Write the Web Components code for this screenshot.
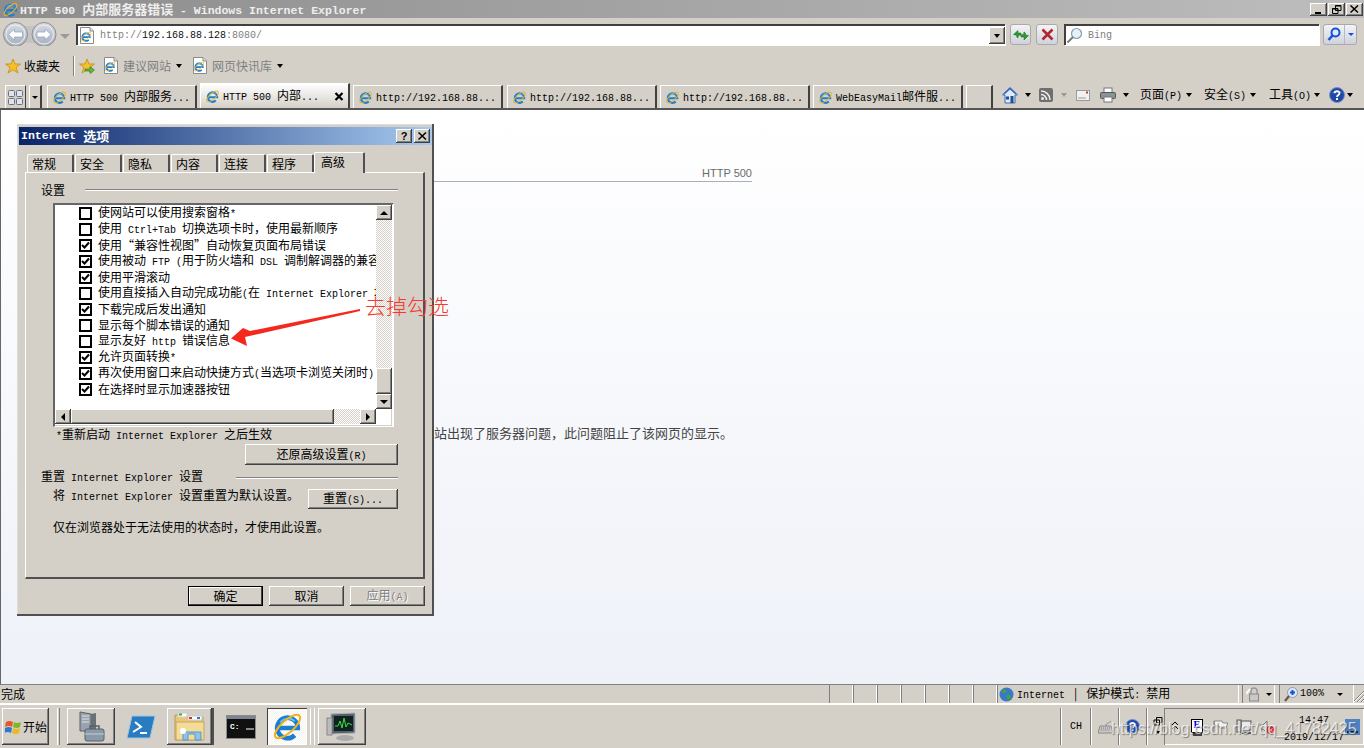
<!DOCTYPE html>
<html lang="zh">
<head>
<meta charset="UTF-8">
<title>HTTP 500 内部服务器错误</title>
<style>
  html, body { margin: 0; height: 748px; overflow: hidden; background: #d4d0c8; }
  ie-window { font: 12px/14px "Noto Sans CJK SC", "Liberation Sans", sans-serif; color: #000; }
</style>
</head>
<body>
<ie-window></ie-window>
<script>
// latin runs get a narrower mono font, so they sit at half the CJK width
const mix = s => s.replace(/[ \x21-\x7e]+/g, m => `<span class="l">${m}</span>`)

const BASE = `
  * { box-sizing: border-box; }
  .l { font: 10px/12px "Liberation Mono", monospace; white-space: pre; }
  .ar { display: inline-block; flex: none; width: 0; height: 0; border-style: solid; border-color: #000 transparent transparent; border-width: 4px 3.500px 0; }
  .ar.off { border-top-color: #9a9a9a; }
  svg { display: block; flex: none; }
`
const RAISED = 'box-shadow: inset -1px -1px #404040, inset 1px 1px #fff, inset -2px -2px #808080;'

const logoInner = `
  <path d="M6 17.500H26A10 10 0 1 0 23 24.500" fill="none" stroke="#1b7fd0" stroke-width="4.500"/>
  <path d="M9 12A9 9 0 0 1 23 11" fill="none" stroke="#6cc3f0" stroke-width="1.500"/>
  <ellipse cx="16" cy="16" rx="15.500" ry="6" transform="rotate(-42 16 16)" fill="none" stroke="#efb221" stroke-width="2"/>`
const logo = n => `<svg width="${n}" height="${n}" viewBox="0 0 32 32">${logoInner}</svg>`
const pageIcon = `<svg width="16" height="17" viewBox="0 0 16 17"><path d="M1.500.500H11L14.500 4V16.500H1.500Z" fill="#fff" stroke="#8a8a8a"/><path d="M11 .500V4H14.500" fill="#ddd" stroke="#8a8a8a"/><g transform="translate(1 3.500) scale(.38)">${logoInner}</g></svg>`
const star = `<path d="M8 1L10 6H15.500L11 9.500L13 15L8 11.800L3 15L5 9.500L.500 6H6Z" fill="#f5c02c" stroke="#c98a10" stroke-width=".8"/>`
const helpIcon = n => `<svg width="${n}" height="${n}" viewBox="0 0 16 16"><circle cx="8" cy="8" r="7.500" fill="#1f49a8" stroke="#7a8fc8"/><path d="M3 6A5.500 4 0 0 1 13 6Z" fill="#7fa0e8" opacity=".6"/><path d="M5.600 6.200C5.600 3.500 10.500 3.500 10.500 6.200C10.500 8 8 8 8 10" fill="none" stroke="#fff" stroke-width="1.800"/><rect x="7" y="11" width="2" height="2" fill="#fff"/></svg>`

class IeTitle extends HTMLElement {
  connectedCallback() {
    this.attachShadow({ mode: 'open' }).innerHTML = `<style>${BASE}
      :host { display: flex; align-items: center; height: 18px; padding-left: 2px; background: linear-gradient(90deg, #8d8d8d, #bdbdbd); color: #eeeeee; font-size: 13px; font-weight: 700; white-space: pre; }
      .l { font-size: 11.500px; font-weight: 700; }
      span.t { margin-left: 1px; }
      .btns { display: flex; gap: 1px; margin-left: auto; margin-right: 1px; }
      .btns i { width: 17px; height: 13px; background: #d4d0c8; ${RAISED} display: flex; align-items: center; justify-content: center; }
    </style>
    ${logo(17)}<span class="t">${mix('HTTP 500 内部服务器错误 - Windows Internet Explorer')}</span>
    <div class="btns">
      <i><svg width="9" height="9"><rect x="1" y="7" width="6" height="2"/></svg></i>
      <i><svg width="10" height="9"><path d="M3.500.500H9V5.500H3.500ZM.500 3.500H6V8.500H.500Z" fill="#d4d0c8" stroke="#000"/><path d="M3 1H9M0 4H6" stroke="#000"/></svg></i>
      <i><svg width="9" height="8"><path d="M.500.500L8 7.500M8 .500L.500 7.500" stroke="#000" stroke-width="1.500"/></svg></i>
    </div>`
  }
}

class IeNav extends HTMLElement {
  connectedCallback() {
    const arrow = (cx, d) => `<circle cx="${cx}" cy="12.500" r="12" fill="url(#g)" stroke="#8f8f8f"/><circle cx="${cx}" cy="12.500" r="9.500" fill="none" stroke="#eef0f4"/><path d="${d}" fill="#fff" stroke="#8aa0bc" stroke-width=".7"/>`
    this.attachShadow({ mode: 'open' }).innerHTML = `<style>${BASE}
      :host { display: flex; height: 28px; padding: 6px 0 0 3px; background: #d4d0c8; align-items: flex-start; }
      .field { height: 21px; background: #fff; display: flex; align-items: center; border-top: 2px solid #404040; border-left: 2px solid #404040; box-shadow: 1px 1px #fff; }
      .addr { width: 929px; margin-left: 6px; padding-left: 1px; }
      .addr .l { color: #808080; margin-left: 5px; }
      .addr b { font-weight: 400; color: #111; }
      .drop { width: 16px; height: 17px; margin-left: auto; background: #d4d0c8; ${RAISED} display: flex; align-items: center; justify-content: center; }
      .tb { height: 21px; border: 1px solid #a9a9b0; border-radius: 3px; background: linear-gradient(#f4f4f6, #cfd2dc); display: flex; align-items: center; justify-content: center; }
      .search { width: 255px; margin-left: 6px; }
      .search .l { color: #808080; margin-left: 5px; }
      .go { display: flex; width: 34px; margin-left: 4px; padding: 0; }
      .go span { display: flex; align-items: center; justify-content: center; height: 100%; }
    </style>
    <svg width="54" height="26" viewBox="0 0 54 26" style="margin-top:-2px">
      <defs><linearGradient id="g" x1="0" y1="0" x2="0" y2="1"><stop offset="0" stop-color="#d8dce4"/><stop offset="1" stop-color="#a6aebc"/></linearGradient></defs>
      <rect x="10" y="4" width="34" height="17" fill="#c4c4c4"/>
      ${arrow(12.5, 'M5.500 12.500L11.500 7V10H19.500V15H11.500V18Z')}
      ${arrow(41, 'M48 12.500L42 7V10H34V15H42V18Z')}
    </svg>
    <i class="ar off" style="margin:10px 0 0 3px;border-width:5px 5px 0"></i>
    <div class="field addr">${pageIcon}<span class="l">http://<b>192.168.88.128</b>:8080/</span>
      <div class="drop"><i class="ar"></i></div></div>
    <div class="tb" style="width:21px;margin-left:5px"><svg width="16" height="14" viewBox="0 0 16 14"><path d="M8 5H5V2.500L.500 6.500L2 7H3.500C3.500 9 4 9.500 5 10C5 8 5.500 7 8 7Z" fill="#2d9a2d" stroke="#156a15" stroke-width=".5"/><path d="M8 9H11V12L15.500 7.500H13C13 5.500 12 4.500 11 4C11 6 10 7 8 7Z" fill="#2d9a2d" stroke="#156a15" stroke-width=".5"/></svg></div>
    <div class="tb" style="width:22px;margin-left:5px"><svg width="13" height="13" viewBox="0 0 13 13"><path d="M1.500 1.500L11.500 11.500M11.500 1.500L1.500 11.500" stroke="#b5252d" stroke-width="2.600"/></svg></div>
    <div class="field search"><svg width="17" height="17" viewBox="0 0 17 17"><circle cx="10.500" cy="6.500" r="5" fill="#e4f1fb" stroke="#8a9cab" stroke-width="1.200"/><path d="M7 10L1.500 15.500" stroke="#7a7a7a" stroke-width="2"/></svg><span class="l">Bing</span></div>
    <div class="tb go"><span style="width:21px;border-right:1px solid #b4b7c4"><svg width="14" height="15" viewBox="0 0 14 15"><circle cx="8.500" cy="5.500" r="4" fill="#dbe9ff" stroke="#1a50d8" stroke-width="2"/><path d="M5.500 8.500L1.500 13" stroke="#1a50d8" stroke-width="2.600"/></svg></span><span style="flex:1"><i class="ar" style="border-top-color:#1a50d8;border-width:3px 3px 0"></i></span></div>`
  }
}

class IeFavs extends HTMLElement {
  connectedCallback() {
    this.attachShadow({ mode: 'open' }).innerHTML = `<style>${BASE}
      :host { display: flex; align-items: center; height: 36px; padding: 3px 0 0 5px; background: #d4d0c8; }
      .off { color: #808080; margin-left: 4px; }
      .sep { width: 1px; height: 20px; margin-left: 13px; background: #808080; box-shadow: 1px 0 #fff; }
    </style>
    <svg width="16" height="16" viewBox="0 0 16 16">${star}</svg>
    <span style="margin-left:3px">收藏夹</span>
    <i class="sep"></i>
    <svg width="16" height="16" viewBox="0 0 16 16" style="margin-left:5px">${star}<path d="M6 11H11V8.500L15.500 12L11 15.500V13H6Z" fill="#5dbb3c" stroke="#2c7a1c" stroke-width=".6"/></svg>
    <span style="margin-left:8px">${pageIcon}</span><span class="off">建议网站</span>
    <i class="ar" style="margin-left:5px"></i>
    <span style="margin-left:10px">${pageIcon}</span><span class="off">网页快讯库</span>
    <i class="ar" style="margin-left:5px"></i>`
  }
}

class IeTab extends HTMLElement {
  connectedCallback() {
    const close = this.hasAttribute('active') ? '<svg class="x" width="10" height="9" viewBox="0 0 10 9"><path d="M1.500 1L8.500 8M8.500 1L1.500 8" stroke="#000" stroke-width="2.200"/></svg>' : ''
    this.attachShadow({ mode: 'open' }).innerHTML = `<style>${BASE}
      :host { display: flex; align-items: center; flex: none; width: 150px; height: 23px; margin-right: 3px; padding-left: 4px; background: #d4d0c8; border-top: 1px solid #fff; border-left: 1px solid #fff; border-right: 2px solid #404040; white-space: nowrap; overflow: hidden; }
      :host([active]) { height: 25px; background: linear-gradient(#fff, #d4d0c8); }
      div { margin-left: 3px; }
      .x { margin-left: auto; margin-right: 4px; }
    </style>${logo(15)}<div><slot></slot></div>${close}`
  }
}

class IeTabstrip extends HTMLElement {
  connectedCallback() {
    this.attachShadow({ mode: 'open' }).innerHTML = `<style>${BASE}
      :host { display: flex; align-items: flex-end; height: 28px; padding-left: 5px; background: #d4d0c8; border-bottom: 2px solid #555; }
      .box { flex: none; height: 23px; border-top: 1px solid #fff; border-left: 1px solid #fff; border-right: 2px solid #404040; display: flex; align-items: center; justify-content: center; }
      .tools { display: flex; align-items: center; align-self: center; height: 22px; white-space: nowrap; }
      .tools span { flex: none; }
    </style>
    <div class="box" style="width:21px;border-right-width:1px"><svg width="15" height="15" viewBox="0 0 15 15"><g fill="#dfe3ee" stroke="#6b7080"><rect x=".5" y=".5" width="6" height="6" rx="1"/><rect x="8.500" y=".5" width="6" height="6" rx="1"/><rect x=".5" y="8.500" width="6" height="6" rx="1"/><rect x="8.500" y="8.500" width="6" height="6" rx="1"/></g></svg></div>
    <div class="box" style="width:13px;margin:0 5px 0 3px"><i class="ar" style="border-width:3px 3px 0"></i></div>
    <ie-tab>${mix('HTTP 500 内部服务...')}</ie-tab>
    <ie-tab active>${mix('HTTP 500 内部...')}</ie-tab>
    <ie-tab>${mix('http://192.168.88...')}</ie-tab>
    <ie-tab style="margin-left:1px">${mix('http://192.168.88...')}</ie-tab>
    <ie-tab>${mix('http://192.168.88...')}</ie-tab>
    <ie-tab>${mix('WebEasyMail邮件服...')}</ie-tab>
    <div class="box" style="width:27px"></div>
    <div class="tools" style="margin-left:9px">
      <svg width="16" height="17" viewBox="0 0 16 17"><path d="M8 .5L.5 8H3V16H13V8H15.500Z" fill="#dfe9f8" stroke="#3b6db8"/><path d="M2 7L8 1.500L14 7" fill="none" stroke="#2f62c8" stroke-width="1.500"/><rect x="8.500" y="9" width="3" height="7" fill="#1d4f96"/><rect x="4" y="9.500" width="3" height="3" fill="#1d4f96"/></svg>
      <i class="ar" style="margin-left:7px"></i>
      <svg width="14" height="14" viewBox="0 0 14 14" style="margin-left:8px"><rect width="14" height="14" rx="2" fill="#6f6f6f"/><circle cx="3.500" cy="10.500" r="1.500" fill="#eee"/><path d="M2 6.500A5.500 5.500 0 0 1 7.500 12M2 3A9 9 0 0 1 11 12" fill="none" stroke="#eee" stroke-width="1.500"/></svg>
      <i class="ar off" style="margin-left:8px"></i>
      <svg width="14" height="11" viewBox="0 0 14 11" style="margin-left:9px"><rect x=".5" y=".5" width="13" height="10" fill="#f1f1f1" stroke="#9a9a9a"/><path d="M2 8H10" stroke="#9a9a9a"/><rect x="10" y="1.500" width="2" height="2" fill="#c33"/></svg>
      <svg width="16" height="16" viewBox="0 0 16 16" style="margin-left:10px"><rect x="4" y="1" width="8" height="5" fill="#fff" stroke="#777"/><rect x=".5" y="5.500" width="15" height="6" rx="1" fill="#8a929c" stroke="#555"/><rect x="4" y="10" width="8" height="5" fill="#fff" stroke="#777"/><rect x="12" y="7" width="2" height="1" fill="#3c3"/></svg>
      <i class="ar" style="margin-left:7px"></i>
      <span style="margin-left:11px">${mix('页面(P)')}</span><i class="ar" style="margin-left:4px"></i>
      <span style="margin-left:12px">${mix('安全(S)')}</span><i class="ar" style="margin-left:4px"></i>
      <span style="margin-left:13px">${mix('工具(O)')}</span><i class="ar" style="margin-left:3px"></i>
      <span style="margin-left:9px">${helpIcon(16)}</span><i class="ar" style="margin-left:2px"></i>
    </div>`
  }
}

class IePage extends HTMLElement {
  connectedCallback() {
    this.attachShadow({ mode: 'open' }).innerHTML = `<style>${BASE}
      :host { display: block; flex: 1; min-height: 0; background: linear-gradient(#fff, #eef1f8); border-left: 1px solid #666; overflow: hidden; }
      .col { width: 552px; margin: 55px 0 0 199px; }
      .code { height: 17px; border-bottom: 1px solid #a9adbd; text-align: right; color: #6a6a6a; font: 11px/16px "Liberation Sans", sans-serif; }
      .msg { margin-top: 242px; padding-left: 208px; white-space: nowrap; font-size: 13px; line-height: 18px; color: #444; }
    </style>
    <div class="col"><div class="code">HTTP 500</div><div class="msg">该网站出现了服务器问题，此问题阻止了该网页的显示。</div></div>`
  }
}

class IeStatus extends HTMLElement {
  connectedCallback() {
    const cells = Array(7).fill('<i class="p" style="width:24px"></i>').join('')
    this.attachShadow({ mode: 'open' }).innerHTML = `<style>${BASE}
      :host { display: flex; align-items: stretch; height: 21px; background: #d4d0c8; border-top: 1px solid #808080; border-bottom: 2px solid #fff; }
      .p { flex: none; display: flex; align-items: center; border-right: 1px solid #fff; border-left: 1px solid #808080; }
      .done { padding-left: 1px; line-height: 18px; margin-right: auto; }
    </style>
    <span class="done">完成</span>${cells}
    <div class="p" style="width:242px;padding-left:1px">
      <svg width="15" height="15" viewBox="0 0 15 15"><circle cx="7.500" cy="7.500" r="7" fill="#3b79c8"/><path d="M3 3C6 1 8 3 7 5C5 7 3 6 3 3ZM8 8C11 7 13 9 11 12C9 14 7 11 8 8Z" fill="#3fa63a"/></svg>
      <span style="margin-left:3px;white-space:nowrap">${mix('Internet')}<span style="margin:0 9px 0 9px">|</span>保护模式<span class="l">: </span>禁用</span>
    </div>
    <div class="p" style="width:33px;margin-left:3px;padding-left:3px">
      <svg width="14" height="15" viewBox="0 0 14 15"><path d="M5 7V4A3 3 0 0 1 11 4V7" fill="none" stroke="#999" stroke-width="1.500"/><rect x="3.500" y="7" width="9" height="7" fill="#c9c9c9" stroke="#888"/><path d="M0 7L4 2" stroke="#fff" stroke-width="2"/></svg>
      <i class="ar" style="margin-left:6px;border-width:3px 3px 0"></i>
    </div>
    <div class="p" style="width:75px;margin-left:4px;padding-left:4px">
      <svg width="14" height="15" viewBox="0 0 14 15"><circle cx="8.500" cy="5.500" r="5" fill="#dbe9ff" stroke="#8a9cab"/><path d="M6 5.500H11M8.500 3V8" stroke="#1a50d8" stroke-width="2"/><path d="M5 9L1 14" stroke="#6b5a3a" stroke-width="2.200"/></svg>
      <span class="l" style="margin-left:2px">100%</span>
      <i class="ar" style="margin-left:13px;border-width:3px 3px 0"></i>
    </div>
    <svg width="10" height="18" viewBox="0 0 10 18"><path d="M-1 17L10 6M3 17L10 10M7 17L10 14" stroke="#808080"/><path d="M0 17L10 7M4 17L10 11M8 17L10 15" stroke="#fff"/></svg>`
  }
}

class TaskBtn extends HTMLElement {
  connectedCallback() {
    this.attachShadow({ mode: 'open' }).innerHTML = `<style>${BASE}
      :host { display: flex; align-items: center; justify-content: center; flex: none; width: 48px; height: 37px; ${RAISED} }
      :host([flat]) { box-shadow: none; }
      :host([pressed]) { background: repeating-conic-gradient(#fff 0 25%, #f4f3f0 0 50%) 0 0/2px 2px; box-shadow: inset 1px 1px #404040, inset -1px -1px #fff; }
    </style><slot></slot>`
  }
}

class WinTaskbar extends HTMLElement {
  connectedCallback() {
    this.attachShadow({ mode: 'open' }).innerHTML = `<style>${BASE}
      :host { display: flex; align-items: center; height: 43px; padding-left: 2px; background: #d4d0c8; overflow: hidden; position: relative; }
      .start { display: flex; align-items: center; flex: none; width: 47px; height: 37px; padding-left: 3px; font-size: 12px; ${RAISED} }
      .bar { flex: none; width: 3px; height: 37px; background: #d4d0c8; border-left: 1px solid #fff; border-right: 1px solid #808080; }
      .stack { flex: none; width: 2px; height: 37px; border-right: 2px solid #505050; }
      .tsep { flex: none; width: 2px; height: 37px; background: #808080; border-right: 1px solid #fff; }
      .tray { flex: none; display: flex; align-items: center; width: 200px; height: 37px; border-top: 1px solid #808080; border-left: 1px solid #808080; box-shadow: inset -1px -1px #fff; }
      .clock { margin-left: 9px; text-align: center; width: 60px; line-height: 16px; white-space: nowrap; }
      .mark { position: absolute; left: 1111px; top: 14px; font: 16px/20px "Liberation Sans", sans-serif; color: rgba(255,255,255,.7); text-shadow: 1px 1px 1px rgba(70,70,70,.6); white-space: nowrap; pointer-events: none; }
    </style>
    <div class="start"><svg width="17" height="16" viewBox="0 0 17 16"><path d="M1 3Q4 1 8 3L7 8Q4 6 0 8Z" fill="#e8562a"/><path d="M9 3Q12 5 16 3L15 8Q12 10 8 8Z" fill="#7cb82a"/><path d="M0 9Q4 7 7 9L6 14Q3 12 -1 14Z" fill="#2b7ad0"/><path d="M8 9Q11 11 15 9L14 14Q11 16 7 14Z" fill="#f0b820"/></svg><span style="margin-left:1px">开始</span></div>
    <i class="bar" style="margin:0 7px 0 8px"></i>
    <task-btn><svg width="30" height="32" viewBox="0 0 30 32"><path d="M4 1L15 3V20H4Z" fill="#9aa3ad" stroke="#5a6068"/><path d="M15 3L20 2V18L15 20Z" fill="#6a7078"/><path d="M6 5H13M6 8H13M6 11H13" stroke="#dfe3e8"/><rect x="9" y="18" width="19" height="12" rx="2" fill="#8a9aa8" stroke="#55606a"/><path d="M14 18V15H23V18" fill="none" stroke="#55606a" stroke-width="1.500"/><path d="M9 23H28" stroke="#c5d0d8"/></svg></task-btn>
    <task-btn flat style="margin-left:2px"><svg width="30" height="24" viewBox="0 0 30 24"><path d="M6 1H29L24 23H1Z" fill="#2a7cc0" stroke="#9cc4e4"/><path d="M9 7L15 12L7 17" fill="none" stroke="#fff" stroke-width="2"/><path d="M14 18H21" stroke="#fff" stroke-width="2"/></svg></task-btn>
    <task-btn style="margin-left:2px;width:45px"><svg width="32" height="30" viewBox="0 0 32 30"><path d="M1 3H10L12 5H29V28H1Z" fill="#e8c878" stroke="#b89a50"/><rect x="4" y="1" width="9" height="4" fill="#fff" stroke="#ccc"/><rect x="5" y="1.500" width="3" height="2" fill="#3a3"/><rect x="14" y="4" width="14" height="4" fill="#fff" stroke="#ccc"/><rect x="15" y="5" width="3" height="2" fill="#c33"/><rect x="23" y="5" width="3" height="2" fill="#37c"/><path d="M2 10H30V28H2Z" fill="#f3dc98" stroke="#c4a660"/><path d="M9 20V28H14V22H21V28H27V20Z" fill="#8cc4e8" stroke="#5a98c8"/><circle cx="9" cy="19" r="3" fill="#fff"/></svg></task-btn>
    <i class="stack"></i>
    <task-btn flat style="margin-left:3px"><svg width="30" height="24" viewBox="0 0 30 24"><rect x=".5" y=".5" width="29" height="23" fill="#101010" stroke="#8a8a8a"/><rect x="1" y="1" width="28" height="3" fill="#7a8694"/><text x="4" y="14" font-family="Liberation Mono" font-size="8" font-weight="700" fill="#fff">C:\</text><path d="M20 14H28" stroke="#fff"/></svg></task-btn>
    <task-btn pressed style="margin-left:2px;width:40px">${logo(33)}</task-btn>
    <i class="stack" style="width:4px;border-color:#fff;border-right-width:1px"></i>
    <i class="stack" style="width:4px;border-color:#fff;border-right-width:1px;margin-right:3px"></i>
    <task-btn><svg width="32" height="30" viewBox="0 0 32 30"><path d="M5 2L29 1V21L5 22Z" fill="#55606a" stroke="#aab2ba"/><rect x="8" y="4" width="19" height="15" fill="#122"/><path d="M9 14L12 14L14 9L16 16L18 6L20 15L22 11L26 13" fill="none" stroke="#3ddc3d"/><rect x="1" y="6" width="5" height="17" fill="#bbb" stroke="#888"/><ellipse cx="19" cy="26" rx="9" ry="3" fill="#aaa"/></svg></task-btn>
    <i class="tsep" style="margin-left:auto"></i>
    <span class="l" style="margin:0 6px 0 8px;width:14px;flex:none">CH</span>
    <i class="tsep"></i>
    <svg width="15" height="14" viewBox="0 0 15 14" style="margin:0 5px 0 6px"><path d="M2 6H13L15 13H0Z" fill="#c8c8c8" stroke="#888"/><path d="M3 8H12M2.500 10H12.500" stroke="#777" stroke-dasharray="1 1"/><path d="M8 6C8 2 11 4 13 1" fill="none" stroke="#888"/></svg>
    <i class="tsep"></i>
    <span style="margin:0 6px 0 5px">${helpIcon(15)}</span>
    <i class="tsep"></i>
    <svg width="10" height="20" viewBox="0 0 10 20" style="margin:0 1px 0 5px"><path d="M3.500 .5H9V5.500H3.500ZM1 3H6.500V8H1Z" fill="#d4d0c8" stroke="#000"/><path d="M3 14H7L5 17Z"/></svg>
    <div class="tray">
      <svg width="8" height="12" viewBox="0 0 8 12" style="margin-left:6px"><path d="M1 4L4 1L7 4M1 8L4 5L7 8" fill="none" stroke="#000"/></svg>
      <svg width="13" height="17" viewBox="0 0 13 17" style="margin-left:12px"><rect x=".5" y=".5" width="11" height="13" fill="#fff" stroke="#000"/><rect x="2" y="1" width="8" height="8" fill="#fff"/><text x="2.500" y="9" font-family="Liberation Serif" font-size="10" font-weight="700" fill="#0000c8">E</text><rect x="2" y="14" width="9" height="3" fill="#444"/></svg>
      <svg width="15" height="14" viewBox="0 0 15 14" style="margin-left:9px"><path d="M1 1H9L10 3H15L13 8H7L6 6H2ZM1 1V14" fill="#f2f2f2" stroke="#888"/></svg>
      <svg width="16" height="16" viewBox="0 0 16 16" style="margin-left:8px"><rect x="5" y="2" width="10" height="9" fill="#e8e8e8" stroke="#555"/><rect x="1" y="1" width="4" height="12" fill="#d8d8d8" stroke="#555"/><path d="M6 14H15" stroke="#555" stroke-width="2"/></svg>
      <svg width="15" height="16" viewBox="0 0 15 16" style="margin-left:8px"><path d="M0 6H3L7 2V14L3 10H0Z" fill="#ddd" stroke="#777"/><circle cx="10.500" cy="11" r="4" fill="#e02b2b"/><path d="M9 9.500L12 12.500M12 9.500L9 12.500" stroke="#fff"/></svg>
      <div class="clock"><span class="l">14:47</span><br><span class="l">2019/12/17</span></div>
      <svg width="15" height="16" viewBox="0 0 15 16" style="margin-left:1px"><rect width="15" height="16" fill="#4d83c4"/><rect x="2" y="12" width="11" height="2" fill="#123"/></svg>
    </div>
    <span class="mark">https://blog.csdn.net/qq_41782425</span>`
  }
}

class OptRow extends HTMLElement {
  connectedCallback() {
    const mark = this.hasAttribute('checked') ? '<svg width="9" height="9" viewBox="0 0 9 9"><path d="M1 4L3.500 6.500L8 1.500" fill="none" stroke="#000" stroke-width="2"/></svg>' : ''
    this.attachShadow({ mode: 'open' }).innerHTML = `<style>${BASE}
      :host { display: flex; align-items: center; height: 16px; padding-left: 24px; white-space: nowrap; }
      .box { flex: none; display: flex; align-items: center; justify-content: center; width: 13px; height: 13px; border: 2px solid #000; background: #fff; margin-right: 6px; }
    </style><span class="box">${mark}</span><div><slot></slot></div>`
  }
}

class DlgButton extends HTMLElement {
  connectedCallback() {
    this.attachShadow({ mode: 'open' }).innerHTML = `<style>${BASE}
      :host { display: flex; align-items: center; justify-content: center; flex: none; height: 21px; background: #d4d0c8; ${RAISED} white-space: nowrap; }
      :host([def]) { outline: 1px solid #000; outline-offset: -1px; box-shadow: inset -2px -2px #404040, inset 2px 2px #fff; }
      :host([disabled]) { color: #808080; text-shadow: 1px 1px #fff; }
    </style><div><slot></slot></div>`
  }
}

class DlgTab extends HTMLElement {
  connectedCallback() {
    this.attachShadow({ mode: 'open' }).innerHTML = `<style>${BASE}
      :host { display: block; flex: none; width: 47px; height: 18px; padding: 2px 0 0 4px; margin-right: 1px; font-size: 12px; border-top: 1px solid #fff; border-left: 1px solid #fff; border-right: 2px solid #505050; border-radius: 2px 2px 0 0; background: #d4d0c8; }
      :host([active]) { width: 51px; height: 21px; padding: 2px 0 0 6px; margin: 0 0 -1px -1px; position: relative; z-index: 1; }
    </style><slot></slot>`
  }
}

class OptionsDialog extends HTMLElement {
  connectedCallback() {
    const rows = [
      [0, '使网站可以使用搜索窗格*'],
      [0, '使用 Ctrl+Tab 切换选项卡时，使用最新顺序'],
      [1, '使用“兼容性视图”自动恢复页面布局错误'],
      [1, '使用被动 FTP (用于防火墙和 DSL 调制解调器的兼容性)'],
      [1, '使用平滑滚动'],
      [0, '使用直接插入自动完成功能(在 Internet Explorer 地址栏)'],
      [1, '下载完成后发出通知'],
      [0, '显示每个脚本错误的通知'],
      [0, '显示友好 http 错误信息'],
      [1, '允许页面转换*'],
      [1, '再次使用窗口来启动快捷方式(当选项卡浏览关闭时)'],
      [1, '在选择时显示加速器按钮'],
    ].map(([c, t]) => `<opt-row ${c ? 'checked' : ''}>${mix(t)}</opt-row>`).join('')
    const tri = r => `<i class="ar" style="border-width:4px;border-style:solid;border-color:transparent;${r}"></i>`
    this.attachShadow({ mode: 'open' }).innerHTML = `<style>${BASE}
      :host { position: absolute; left: 17px; top: 124px; width: 417px; height: 492px; padding: 3px 2px 0; background: #d4d0c8; box-shadow: inset -2px -2px #505050, inset 1px 1px #ddd; z-index: 2; }
      .title { display: flex; align-items: center; height: 18px; padding: 0 2px 0 2px; background: linear-gradient(90deg, #0a246a, #a6caf0); color: #fff; font-weight: 700; font-size: 13px; }
      .title .l { font-size: 11.500px; font-weight: 700; }
      .title i { display: flex; align-items: center; justify-content: center; width: 16px; height: 14px; margin-left: 2px; background: #d4d0c8; color: #000; font: 700 11px/14px "Liberation Sans", sans-serif; ${RAISED} }
      .tabs { display: flex; align-items: flex-end; height: 20px; margin-top: 7px; padding-left: 8px; }
      .panel { width: 400px; height: 407px; margin: 0 0 0 6px; padding-top: 8px; border-top: 1px solid #fff; border-left: 1px solid #fff; border-right: 2px solid #505050; border-bottom: 2px solid #505050; }
      .head { display: flex; align-items: center; height: 17px; margin-left: 15px; margin-right: 25px; white-space: nowrap; }
      .head u { flex: 1; height: 1px; background: #808080; box-shadow: 0 1px #fff; }
      .list { display: grid; grid-template-columns: 321px 16px; grid-template-rows: 204px 15px; width: 341px; height: 224px; margin: 5px 0 0 27px; background: #fff; border-top: 2px solid #666; border-left: 2px solid #666; border-right: 2px solid #fff; border-bottom: 1px solid #fff; box-shadow: inset -1px -1px #d4d0c8; }
      .rows { overflow: hidden; }
      .vbar { display: flex; flex-direction: column; }
      .hbar { display: flex; }
      .sb { flex: none; width: 16px; height: 15px; background: #d4d0c8; ${RAISED} display: flex; align-items: center; justify-content: center; }
      .track { background: repeating-conic-gradient(#fff 0 25%, #d4d0c8 0 50%) 0 0/2px 2px; }
      .thumb { background: #d4d0c8; ${RAISED} }
      .note { height: 14px; margin-left: 30px; white-space: nowrap; }
      .row { display: flex; }
      .after { line-height: 12px; margin-left: 27px; white-space: nowrap; }
      .foot { display: flex; justify-content: flex-end; gap: 6px; margin-top: 7px; padding-right: 7px; }
      .foot dlg-button { width: 75px; height: 20px; }
    </style>
    <div class="title">${mix('Internet 选项')}<i style="margin-left:auto">?</i><i><svg width="9" height="8"><path d="M.500.500L8 7.500M8 .500L.500 7.500" stroke="#000" stroke-width="1.500"/></svg></i></div>
    <div class="tabs">
      <dlg-tab>常规</dlg-tab><dlg-tab>安全</dlg-tab><dlg-tab>隐私</dlg-tab><dlg-tab>内容</dlg-tab><dlg-tab>连接</dlg-tab><dlg-tab>程序</dlg-tab><dlg-tab active>高级</dlg-tab>
    </div>
    <div class="panel">
      <div class="head"><span style="margin-right:20px">设置</span><u></u></div>
      <div class="list">
        <div class="rows">${rows}</div>
        <div class="vbar">
          <div class="sb">${tri('border-bottom-color:#000;border-top:0')}</div>
          <div class="track" style="flex:1"></div>
          <div class="thumb" style="height:26px"></div>
          <div class="sb">${tri('border-top-color:#000;border-bottom:0')}</div>
        </div>
        <div class="hbar">
          <div class="sb">${tri('border-right-color:#000;border-left:0')}</div>
          <div class="thumb" style="width:263px"></div>
          <div class="track" style="flex:1"></div>
          <div class="sb">${tri('border-left-color:#000;border-right:0')}</div>
        </div>
      </div>
      <div class="note">${mix('*重新启动 Internet Explorer 之后生效')}</div>
      <dlg-button style="width:153px;margin:3px 0 0 219px">${mix('还原高级设置(R)')}</dlg-button>
      <div class="head" style="height:14px;margin-top:5px"><span style="margin-right:33px">${mix('重置 Internet Explorer 设置')}</span><u></u></div>
      <div class="row" style="height:20px;margin-top:5px">
        <div class="after">${mix('将 Internet Explorer 设置重置为默认设置。')}</div>
        <dlg-button style="width:90px;height:20px;margin-left:auto;margin-right:25px">${mix('重置(S)...')}</dlg-button>
      </div>
      <div class="after" style="margin-top:12px">仅在浏览器处于无法使用的状态时，才使用此设置。</div>
    </div>
    <div class="foot">
      <dlg-button def>确定</dlg-button><dlg-button>取消</dlg-button><dlg-button disabled>${mix('应用(A)')}</dlg-button>
    </div>`
  }
}

class IeWindow extends HTMLElement {
  connectedCallback() {
    this.attachShadow({ mode: 'open' }).innerHTML = `<style>${BASE}
      :host { display: flex; flex-direction: column; position: relative; width: 1364px; height: 748px; overflow: hidden; }
      .hint { position: absolute; left: 365px; top: 292px; z-index: 3; color: #f33a2e; font: 300 21px/26px "Noto Sans CJK SC", sans-serif; white-space: nowrap; }
      .arrow { position: absolute; left: 225px; top: 300px; z-index: 3; }
    </style>
    <ie-title></ie-title>
    <ie-nav></ie-nav>
    <ie-favs></ie-favs>
    <ie-tabstrip></ie-tabstrip>
    <ie-page></ie-page>
    <ie-status></ie-status>
    <win-taskbar></win-taskbar>
    <options-dialog></options-dialog>
    <span class="hint">去掉勾选</span>
    <svg class="arrow" width="140" height="50" viewBox="225 300 140 50"><path d="M360 309L250 331L243 328L231 338.500L247 346L245 337L360 311Z" fill="#f5281e"/></svg>`
  }
}

customElements.define('ie-title', IeTitle)
customElements.define('ie-nav', IeNav)
customElements.define('ie-favs', IeFavs)
customElements.define('ie-tab', IeTab)
customElements.define('ie-tabstrip', IeTabstrip)
customElements.define('ie-page', IePage)
customElements.define('ie-status', IeStatus)
customElements.define('task-btn', TaskBtn)
customElements.define('win-taskbar', WinTaskbar)
customElements.define('opt-row', OptRow)
customElements.define('dlg-button', DlgButton)
customElements.define('dlg-tab', DlgTab)
customElements.define('options-dialog', OptionsDialog)
customElements.define('ie-window', IeWindow)
</script>
</body>
</html>
